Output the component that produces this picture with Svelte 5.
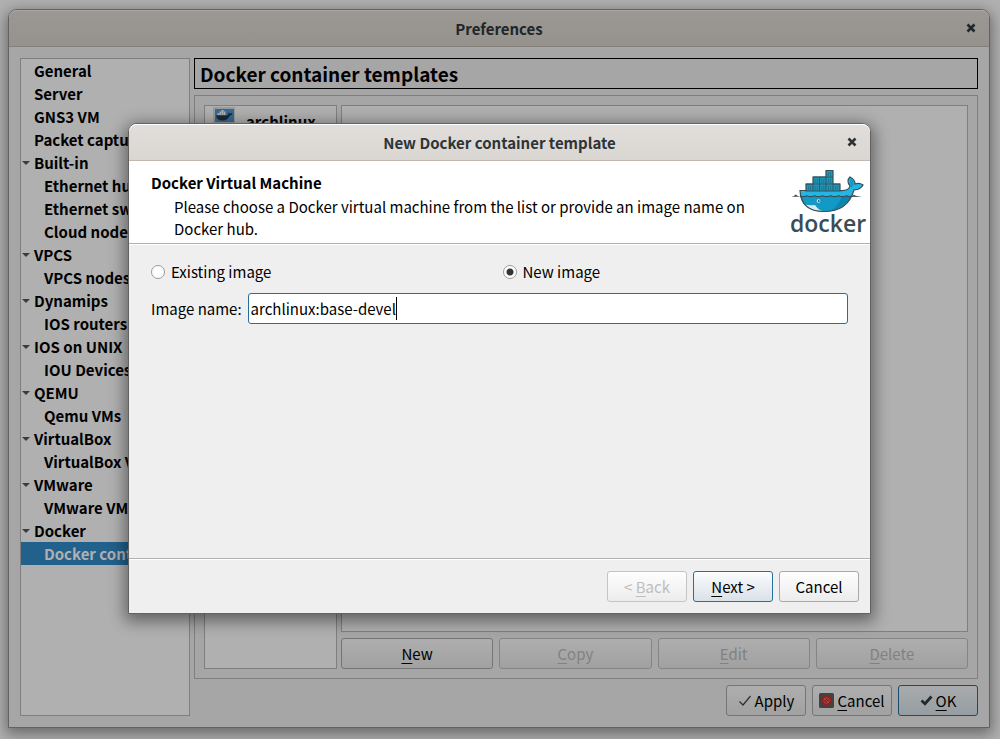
<script>
  const tree = [
    { label: 'General' },
    { label: 'Server' },
    { label: 'GNS3 VM' },
    { label: 'Packet capture' },
    { label: 'Built-in', items: ['Ethernet hubs', 'Ethernet switches', 'Cloud nodes'] },
    { label: 'VPCS', items: ['VPCS nodes'] },
    { label: 'Dynamips', items: ['IOS routers'] },
    { label: 'IOS on UNIX', items: ['IOU Devices'] },
    { label: 'QEMU', items: ['Qemu VMs'] },
    { label: 'VirtualBox', items: ['VirtualBox VMs'] },
    { label: 'VMware', items: ['VMware VMs'] },
    { label: 'Docker', items: ['Docker containers'] }
  ];
  let selected = $state('Docker containers');
  let source = $state('new');
  let imageName = $state('archlinux:base-devel');
</script>

{#snippet closeIcon()}
  <svg width="10" height="10" viewBox="0 0 10 10" aria-hidden="true">
    <path d="M1.5 1.5 8.5 8.5M8.5 1.5 1.5 8.5" stroke="currentColor" stroke-width="2.6" />
  </svg>
{/snippet}

<main class="window">
  <header class="titlebar">
    <h1>Preferences</h1>
    <button class="close" aria-label="Close preferences">{@render closeIcon()}</button>
  </header>

  <div class="body">
    <nav class="tree" aria-label="Preference pages">
      {#each tree as group}
        <button class="row" class:selected={selected === group.label} onclick={() => (selected = group.label)}>
          <span class="twist" class:open={group.items}></span>{group.label}
        </button>
        {#each group.items ?? [] as item}
          <button class="row child" class:selected={selected === item} onclick={() => (selected = item)}>{item}</button>
        {/each}
      {/each}
    </nav>

    <section class="page">
      <h2>Docker container templates</h2>
      <div class="group">
        <div class="list">
          <div class="template">
            <svg width="22" height="22" viewBox="0 0 22 22" aria-hidden="true">
              <rect width="22" height="22" rx="1" fill="#9b9b9b" />
              <rect x="2" y="2" width="19" height="13" fill="#356a98" />
              <path d="M3 8.500h10.500q2 0 2-3l1.500 1 2.500-.5q-.5 2.500-3 2.800Q15 13.500 9.500 13.500 4 13.500 3 8.500Z" fill="#20272c" />
              <path d="M4.500 6H6.500V4.500H8.500V3H10.500V4.500H12.500V8H4.500Z" fill="#aab2b8" />
              <path d="M6.500 6v2M8.500 4.500V8M10.500 4.500V8" stroke="#6d7c88" stroke-width=".5" />
            </svg>
            <strong>archlinux</strong>
          </div>
        </div>
        <div class="detail">
          <div class="preview"></div>
          <div class="actions">
            <button class="btn"><span><u>N</u>ew</span></button>
            <button class="btn" disabled><span><u>C</u>opy</span></button>
            <button class="btn" disabled><span><u>E</u>dit</span></button>
            <button class="btn" disabled><span><u>D</u>elete</span></button>
          </div>
        </div>
      </div>
      <footer class="footer">
        <button class="btn">
          <svg width="14" height="14" viewBox="0 0 14 14" aria-hidden="true"><path d="M1.500 7.500 5 11 12.500 2" fill="none" stroke="#2b2e30" stroke-width="1.200" /></svg>
          <span>Apply</span>
        </button>
        <button class="btn">
          <svg width="15" height="15" viewBox="0 0 15 15" aria-hidden="true">
            <rect width="15" height="15" rx="1.500" fill="#424243" />
            <circle cx="7.500" cy="7.500" r="4.800" fill="#9a1d19" />
            <circle cx="7.500" cy="7.500" r="2.700" fill="#7b2321" stroke="#b0554f" stroke-width=".8" />
            <path d="m5.600 5.600 3.800 3.800" stroke="#b0554f" />
          </svg>
          <span><u>C</u>ancel</span>
        </button>
        <button class="btn default">
          <svg width="13" height="13" viewBox="0 0 13 13" aria-hidden="true"><path d="M1.500 6.500 5 9.800 11.500 2.500" fill="none" stroke="#222a2d" stroke-width="2.800" /></svg>
          <span><u>O</u>K</span>
        </button>
      </footer>
    </section>
  </div>

  <div class="overlay">
    <div class="dialog" role="dialog" aria-labelledby="dialog-title">
      <header class="titlebar">
        <h1 id="dialog-title">New Docker container template</h1>
        <button class="close" aria-label="Close dialog">{@render closeIcon()}</button>
      </header>

      <div class="banner">
        <div class="intro">
          <h2>Docker Virtual Machine</h2>
          <p>Please choose a Docker virtual machine from the list or provide an image name on Docker hub.</p>
        </div>
        <svg class="logo" width="76" height="70" viewBox="0 0 76 70" role="img" aria-label="Docker">
          <path d="M10 21.500H50Q59 22 60 17 56 12 60 8 65 10.500 65 15 69.500 13.500 73 16 70.500 21 64 20.800 58 42.500 34 42.500 11 42.500 10 21.500Z" fill="#24b5e4" />
          <path d="M10.300 27H62Q54 42.500 34 42.500 13 42 10.300 27Z" fill="#129ac6" />
          <path d="M40 42Q56 38 61.500 27H52Q48 38 40 42Z" fill="#0c86ae" />
          <path d="M14 35Q19 37 25 36 28 41 34 42.500 20 43 14 35Z" fill="#d5eaef" />
          <path d="M60.500 9.500Q64 12 63.500 16.500L61 19Q59.500 13 60.500 9.500Z" fill="#129ac6" />
          <path d="M10 21.500H50Q59 22 60 17 56 12 60 8 65 10.500 65 15 69.500 13.500 73 16 70.500 21 64 20.800 58 42.500 34 42.500 11 42.500 10 21.500Z" fill="none" stroke="#394d54" stroke-width="1.200" />
          <path d="M16 15h7V8h13V1.500h7V15h7v7H16Z" fill="#1f94b3" stroke="#394d54" stroke-width="1.200" />
          <path d="M16 15h34M23 8h20M23 15v7M29.500 8v14M36 8v14M43 15v7" stroke="#2c5d6d" />
          <path d="M18.500 17v4M20.500 17v4M25.200 10v4M27.300 10v4M25.200 17v4M27.300 17v4M31.700 10v4M33.800 10v4M31.700 17v4M33.800 17v4M38.500 3.500V7M40.500 3.500V7M38.500 10v4M40.500 10v4M38.500 17v4M40.500 17v4M45.500 17v4M47.500 17v4" stroke="#17748f" stroke-width=".8" />
          <path d="M1.500 27.800q2.500-.3 4.300-2.300 1.200 2 5 2.200ZM59 27.800q3-.3 5-2 1.500 1.500 8.500 2.200Z" fill="#394d54" />
          <path d="M10.500 27q3 1.500 6-.3 4 2 8 0 4 2 8 0 4 2 8 0 4 2 8 0 4 2 8 0 3 1.500 6 .3" fill="none" stroke="#394d54" stroke-width="1.200" />
          <circle cx="28.500" cy="32" r="1.800" fill="#e8f4f7" />
          <circle cx="28.700" cy="32" r="1" fill="#394d54" />
          <text x="0" y="63" font-size="23" font-weight="600" fill="#394d54">docker</text>
        </svg>
      </div>

      <form class="form" onsubmit={(e) => e.preventDefault()}>
        <div class="choices">
          <label><input type="radio" name="source" value="existing" bind:group={source} />Existing image</label>
          <label><input type="radio" name="source" value="new" bind:group={source} />New image</label>
        </div>
        <div class="field">
          <label for="image-name">Image name:</label>
          <div class="entry">
            <input id="image-name" type="text" spellcheck="false" bind:value={imageName} />
            <span class="caret"></span>
          </div>
        </div>
      </form>

      <footer class="dialog-footer">
        <button class="btn" disabled><span>&lt; <u>B</u>ack</span></button>
        <button class="btn default"><span><u>N</u>ext &gt;</span></button>
        <button class="btn">Cancel</button>
      </footer>
    </div>
  </div>
</main>

<style>
  :global(body) {
    background: #b0b0b0;
  }
  * {
    box-sizing: border-box;
  }
  .window {
    --line: #7f7f7f;
    --base: #b0b0b0;
    --face: #a6a6a6;
    --text: #000;
    --btn-top: #aeaeae;
    --btn-bottom: #a1a1a1;
    --btn-line: #757575;
    --off-line: #858585;
    --off-text: #818181;
    --accent: #1a4d6b;
    --accent-top: #a9abad;
    --accent-bottom: #969da1;
    position: relative;
    display: flex;
    flex-direction: column;
    min-height: calc(100vh - 20px);
    margin: 9px 10px 11px 8px;
    border: 1px solid #626262;
    border-radius: 9px 9px 0 0;
    background: var(--face);
    box-shadow: 0 4px 14px 2px rgba(0, 0, 0, 0.4);
    color: var(--text);
    font: 15px/22px 'Noto Sans CJK SC', 'Noto Sans', sans-serif;
  }
  h1, h2, p {
    margin: 0;
  }
  button, input {
    font: inherit;
    color: inherit;
  }
  u {
    text-decoration: underline 1px;
    text-underline-offset: 3px;
    text-decoration-skip-ink: none;
  }
  .titlebar {
    display: flex;
    align-items: center;
    height: 37px;
    padding: 0 12px 0 24px;
    border-bottom: 1px solid #85807b;
    border-radius: 8px 8px 0 0;
    background: linear-gradient(#9b9794, #96938d);
    box-shadow: inset 0 1px #aaa7a4;
    color: #202628;
  }
  .titlebar h1 {
    flex: 1;
    padding-top: 2px;
    text-align: center;
    font-size: 15px;
    font-weight: 700;
  }
  .close {
    display: grid;
    place-items: center;
    width: 12px;
    height: 22px;
    padding: 0;
    border: 0;
    background: none;
  }
  .body {
    flex: 1;
    display: flex;
    gap: 4px;
    padding: 11px;
  }
  .tree {
    flex: none;
    display: flex;
    flex-direction: column;
    width: 170px;
    border: 1px solid var(--line);
    background: var(--base);
    overflow: hidden;
  }
  .row {
    display: flex;
    align-items: center;
    height: 23px;
    padding: 0;
    border: 0;
    background: none;
    font-weight: 700;
    white-space: nowrap;
  }
  .row.child {
    padding-left: 23px;
  }
  .row.selected {
    background: #22618c;
    color: #b0b0b0;
  }
  .twist {
    width: 13px;
  }
  .twist.open::before {
    content: '';
    display: block;
    width: 0;
    margin-left: 1px;
    border: 4px solid transparent;
    border-top-color: #3c3c3c;
    border-bottom: 0;
  }
  .page {
    flex: 1;
    min-width: 0;
    display: flex;
    flex-direction: column;
    gap: 6px;
  }
  .page h2 {
    padding: 4px 5px 3px;
    border: 1px solid #000;
    font-size: 19px;
    line-height: 22px;
    font-weight: 700;
  }
  .group {
    flex: 1;
    display: flex;
    gap: 4px;
    padding: 9px;
    border: 1px solid var(--line);
  }
  .list {
    width: 133px;
    border: 1px solid var(--line);
    background: var(--base);
  }
  .template {
    display: flex;
    align-items: center;
    gap: 11px;
    padding: 1px 8px;
    height: 32px;
  }
  .template svg {
    align-self: flex-start;
  }
  .detail {
    flex: 1;
    display: flex;
    flex-direction: column;
    gap: 6px;
  }
  .preview {
    flex: 1;
    border: 1px solid var(--line);
    background: var(--base);
  }
  .actions {
    display: grid;
    grid-template-columns: repeat(4, 1fr);
    gap: 6px;
  }
  .btn {
    display: flex;
    align-items: center;
    justify-content: center;
    gap: 3px;
    height: 31px;
    min-width: 80px;
    padding: 0 4px;
    border: 1px solid var(--btn-line);
    border-radius: 3px;
    background: linear-gradient(var(--btn-top), var(--btn-bottom));
  }
  .btn:disabled {
    border-color: var(--off-line);
    color: var(--off-text);
  }
  .btn.default {
    border-color: var(--accent);
    background: linear-gradient(var(--accent-top), var(--accent-bottom));
  }
  .footer {
    display: flex;
    justify-content: flex-end;
    gap: 6px;
  }
  .overlay {
    position: absolute;
    inset: -1px -2px -1px -1px;
    display: grid;
    place-items: center;
  }
  .dialog {
    --btn-top: #fefefe;
    --btn-bottom: #ececec;
    --btn-line: #a9a9a9;
    --off-line: #c4c4c4;
    --off-text: #bebebe;
    --accent: #256f9f;
    --accent-top: #fbfcfd;
    --accent-bottom: #d9e1e8;
    display: flex;
    flex-direction: column;
    width: calc(100% - 240px);
    height: calc(100% - 228px);
    border: 1px solid #626262;
    border-radius: 9px 9px 0 0;
    background: #efefef;
    box-shadow: 0 4px 16px 3px rgba(0, 0, 0, 0.45);
  }
  .dialog .titlebar {
    border-color: #c0b8b1;
    background: linear-gradient(#e1dedb, #dad6d2);
    box-shadow: inset 0 1px #fff;
    color: #2e3436;
  }
  .banner {
    display: flex;
    justify-content: space-between;
    height: 83px;
    padding: 0 4px 0 22px;
    border-bottom: 1px solid #b2b2b2;
    background: #fff;
  }
  .intro {
    padding-top: 9px;
  }
  .intro h2 {
    font-size: 15px;
    line-height: 26px;
    font-weight: 700;
  }
  .intro p {
    max-width: 600px;
    padding-left: 23px;
  }
  .logo {
    flex: none;
    margin-top: 8px;
    overflow: visible;
    font-family: 'Open Sans', sans-serif;
  }
  .form {
    flex: 1;
    display: flex;
    flex-direction: column;
    gap: 10px;
    padding: 16px 22px;
    border-top: 1px solid #fff;
    border-bottom: 1px solid #b2b2b2;
  }
  .choices {
    display: grid;
    grid-template-columns: 1fr 1fr;
    gap: 6px;
  }
  .choices label {
    display: flex;
    align-items: center;
    gap: 6px;
  }
  .choices input {
    appearance: none;
    width: 14px;
    height: 14px;
    margin: 0;
    border: 1px solid #9b9b9b;
    border-radius: 50%;
    background: #fff;
  }
  .choices input:checked {
    background: radial-gradient(circle, #333 3px, #fff 4px);
  }
  .field {
    display: flex;
    align-items: center;
    gap: 6px;
  }
  .entry {
    position: relative;
    flex: 1;
  }
  .entry input {
    display: block;
    width: 100%;
    height: 31px;
    padding: 0 2px;
    border: 1px solid #256f9f;
    border-radius: 3px;
    background: #fff;
    outline: 0;
  }
  .caret {
    position: absolute;
    top: 4px;
    left: 148px;
    width: 1px;
    height: 23px;
    background: #000;
  }
  .dialog-footer {
    display: flex;
    justify-content: flex-end;
    gap: 6px;
    padding: 11px;
    border-top: 1px solid #fff;
  }
</style>
